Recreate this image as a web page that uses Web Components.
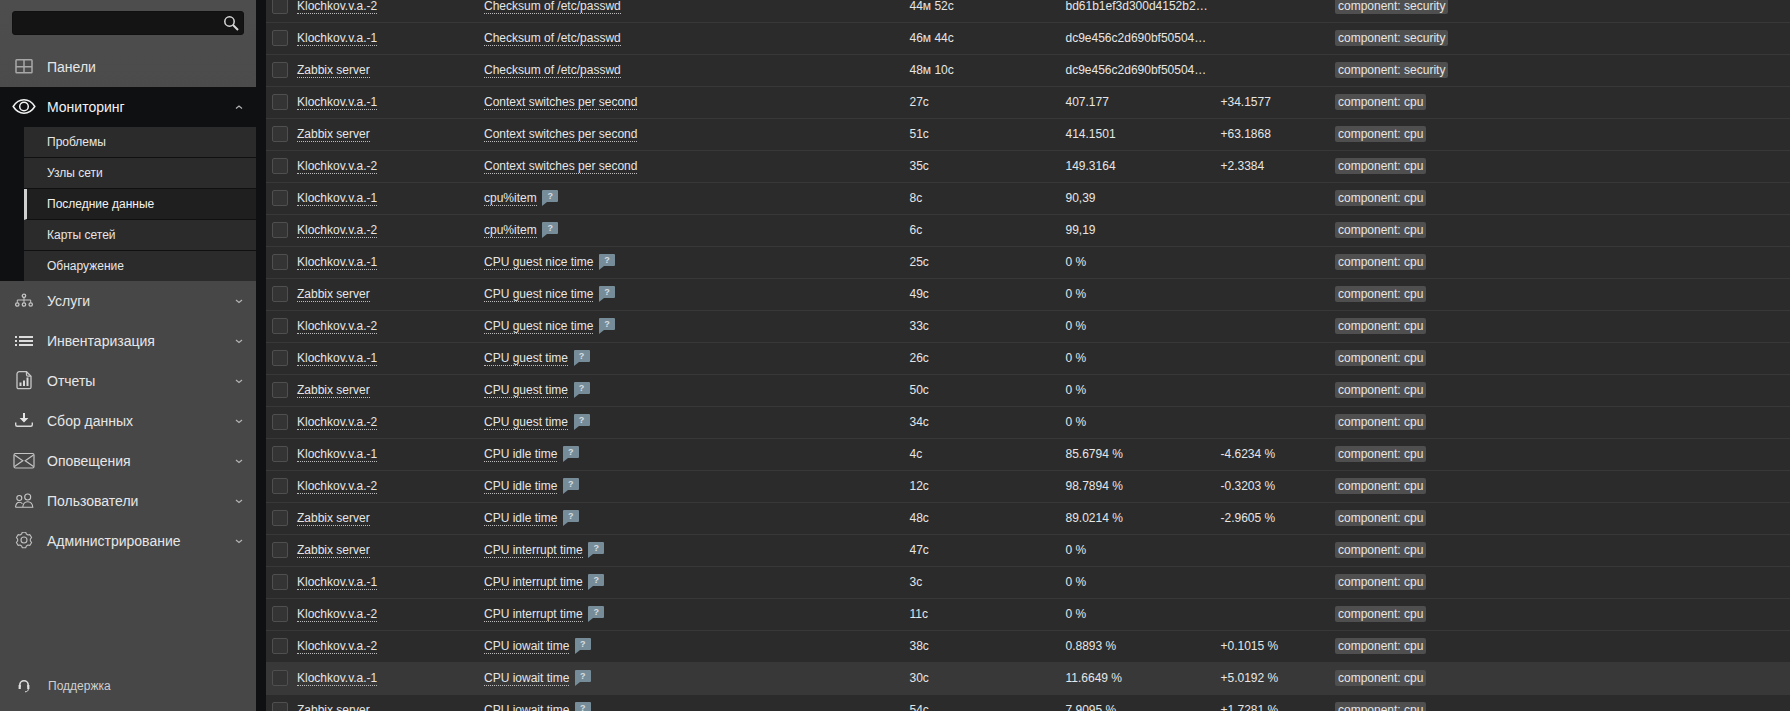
<!DOCTYPE html>
<html lang="ru">
<head>
<meta charset="utf-8">
<title>Последние данные</title>
<style>
  html, body { margin: 0; height: 100%; overflow: hidden; background: #0e1012; }
  body { font-family: "Liberation Sans", Arial, sans-serif; font-size: 12px; color: #e6e6e6; }
</style>
</head>
<body>
<zbx-app>
  <zbx-sidebar slot="side">
    <zbx-search></zbx-search>
    <zbx-nav-item label="Панели">
      <svg slot="icon" width="20" height="16" viewBox="0 0 20 16" fill="none" stroke="#a8a8a8" stroke-width="1.500"><rect x="2" y=".8" width="16" height="13" rx=".8"/><path d="M10 .8v13M2 7.800h16"/></svg>
    </zbx-nav-item>
    <zbx-nav-item label="Мониторинг" open>
      <svg slot="icon" width="24" height="18" viewBox="0 .5 24 18" fill="none" stroke="#f2f2f2" stroke-width="1.500"><path d="M1.200 9C4 4.600 7.800 2.300 12 2.300S20 4.600 22.800 9C20 13.400 16.200 15.700 12 15.700S4 13.400 1.200 9Z"/><circle cx="12" cy="9" r="4.300"/></svg>
      <zbx-sub-item>Проблемы</zbx-sub-item>
      <zbx-sub-item>Узлы сети</zbx-sub-item>
      <zbx-sub-item active>Последние данные</zbx-sub-item>
      <zbx-sub-item>Карты сетей</zbx-sub-item>
      <zbx-sub-item>Обнаружение</zbx-sub-item>
    </zbx-nav-item>
    <zbx-nav-item label="Услуги" closed>
      <svg slot="icon" width="20" height="16" viewBox="0 0 20 16" fill="none" stroke="#c4c4c4" stroke-width="1.300"><circle cx="10" cy="2.800" r="1.700"/><circle cx="3.300" cy="11.500" r="1.700"/><circle cx="10" cy="11.500" r="1.700"/><circle cx="16.700" cy="11.500" r="1.700"/><path stroke-width="1" d="M10 4.500v5.300M3.300 9.800V7h13.400v2.800"/></svg>
    </zbx-nav-item>
    <zbx-nav-item label="Инвентаризация" closed>
      <svg slot="icon" width="20" height="12" viewBox="0 0 20 12" fill="#dcdcdc"><rect x="1" y="1" width="2" height="2"/><rect x="1" y="5" width="2" height="2"/><rect x="1" y="9" width="2" height="2"/><rect x="5" y="1" width="14" height="2"/><rect x="5" y="5" width="14" height="2"/><rect x="5" y="9" width="14" height="2"/></svg>
    </zbx-nav-item>
    <zbx-nav-item label="Отчеты" closed>
      <svg slot="icon" width="16" height="20" viewBox="0 0 16 20" fill="none" stroke="#c8c8c8" stroke-width="1.300"><path d="M3.200 .7h7.300L15 5.200v11a1.500 1.500 0 0 1-1.500 1.500h-11A1.500 1.500 0 0 1 1 16.200V2.900A2.200 2.200 0 0 1 3.200 .7Z"/><path d="M10.500 .7v3a1.500 1.500 0 0 0 1.500 1.500h3"/><path fill="#d8d8d8" stroke="none" d="M3.500 11.500h2V15h-2zM7 9.500h2V15H7zM10.500 6.500h2V15h-2z"/></svg>
    </zbx-nav-item>
    <zbx-nav-item label="Сбор данных" closed>
      <svg slot="icon" width="20" height="16" viewBox="0 0 20 16" fill="#e4e4e4"><path d="M9 0h2v5h3.400L10 9.500 5.600 5H9z"/><path fill="none" stroke="#d8d8d8" stroke-width="1.400" d="M1.700 9.500v2.300a1.500 1.500 0 0 0 1.500 1.500h13.600a1.500 1.500 0 0 0 1.500-1.500V9.500"/></svg>
    </zbx-nav-item>
    <zbx-nav-item label="Оповещения" closed>
      <svg slot="icon" width="22" height="18" viewBox="0 0 22 18" fill="none" stroke="#c4c4c4" stroke-width="1.200"><rect x="1" y="1.500" width="20" height="14.500" rx="1.500"/><path d="M1.500 3 9.800 8.800 1.500 14.500M20.500 3 12.200 8.800 20.500 14.500"/></svg>
    </zbx-nav-item>
    <zbx-nav-item label="Пользователи" closed>
      <svg slot="icon" width="20" height="16" viewBox="0 0 20 16" fill="none" stroke="#c8c8c8" stroke-width="1.100"><circle cx="5.300" cy="5" r="2.500"/><circle cx="13.700" cy="4" r="3"/><path d="M1.500 14.200c.3-2.800 1.700-5 3.900-5 1.300 0 2.300.5 3 1.500M1.500 14.200h6.700M8.700 14.200c.3-3.300 2-5.500 5-5.500s4.800 2.200 5.100 5.500z"/></svg>
    </zbx-nav-item>
    <zbx-nav-item label="Администрирование" closed>
      <svg slot="icon" width="18" height="18" viewBox="0 1 18 18" fill="none" stroke="#c0c0c0" stroke-width="1.100" stroke-linejoin="round"><circle cx="9" cy="9" r="3"/><path d="M6.600 3.070 7.340 1.180h3.320l.74 1.890 1.540.89 2-.31 1.660 2.880-1.260 1.580v1.780l1.260 1.580-1.660 2.880-2-.31-1.540.89-.74 1.890H7.340l-.74-1.890-1.540-.89-2 .31-1.660-2.880 1.260-1.580V8.110L1.400 6.530l1.660-2.880 2 .31z"/></svg>
    </zbx-nav-item>
    <zbx-support slot="foot">Поддержка</zbx-support>
  </zbx-sidebar>
  <zbx-table id="table"></zbx-table>
</zbx-app>

<script>
class ZbxApp extends HTMLElement {
    constructor() {
        super();
        this.attachShadow({ mode: "open" }).innerHTML = `
        <style>
            :host { display: flex; height: 711px; overflow: hidden; }
            main { flex: 1; margin-left: 10px; overflow: hidden; background: #2b2b2b; }
        </style>
        <slot name="side"></slot>
        <main><slot></slot></main>`;
    }
}

class ZbxSidebar extends HTMLElement {
    constructor() {
        super();
        this.attachShadow({ mode: "open" }).innerHTML = `
        <style>
            :host { display: flex; flex-direction: column; flex: 0 0 256px; height: 711px;
                    background: linear-gradient(#4d4d4d, #474747 300px); }
            .list { display: flex; flex-direction: column; flex: 1; }
            .foot { padding: 0 0 17px; }
        </style>
        <div class="list"><slot></slot></div>
        <div class="foot"><slot name="foot"></slot></div>`;
    }
}

class ZbxSearch extends HTMLElement {
    constructor() {
        super();
        this.attachShadow({ mode: "open" }).innerHTML = `
        <style>
            :host { display: flex; justify-content: flex-end; align-items: center; box-sizing: border-box;
                    width: 232px; height: 24px; margin: 11px 12px 12px; padding-right: 4px;
                    background: #141414; border: 1px solid #0e1012; border-radius: 3px; }
            svg { display: block; }
        </style>
        <svg width="16" height="16" viewBox="0 0 16 16" fill="none" stroke="#d8d8d8"><circle cx="6.500" cy="6.500" r="4.700" stroke-width="1.500"/><path d="M10 10l5 5" stroke-width="2"/></svg>`;
    }
}

class ZbxNavItem extends HTMLElement {
    constructor() {
        super();
        this.attachShadow({ mode: "open" }).innerHTML = `
        <style>
            :host { display: block; font-size: 14px; color: #e6e6e6; }
            .head { display: flex; align-items: center; height: 40px; padding-right: 13px; }
            .icon { display: flex; justify-content: center; align-items: center; flex: 0 0 48px; margin-right: -1px; }
            .label { flex: 1; }
            .chev { display: none; }
            :host([open]) { background: #0e1012; color: #f2f2f2; }
            :host([open]) .chev, :host([closed]) .chev { display: block; }
            .sub { padding-left: 24px; }
        </style>
        <div class="head">
            <div class="icon"><slot name="icon"></slot></div>
            <div class="label">${this.getAttribute("label")}</div>
            <svg class="chev" width="8" height="6" viewBox="0 0 8 6" fill="none" stroke="#b4b4b4" stroke-width="1.200">
                <path d="${this.hasAttribute("open") ? "M1 4.500 4 2l3 2.500" : "M1 2 4 4.500 7 2"}"/>
            </svg>
        </div>
        <div class="sub"><slot></slot></div>`;
    }
}

class ZbxSubItem extends HTMLElement {
    constructor() {
        super();
        this.attachShadow({ mode: "open" }).innerHTML = `
        <style>
            :host { display: flex; align-items: center; box-sizing: border-box; height: 31px; padding-left: 23px;
                    font-size: 12px; color: #e6e6e6; background: #2b2b2b; border-bottom: 1px solid #0e1012; }
            :host(:last-child) { height: 30px; border-bottom: 0; }
            :host([active]) { background: #1f1f1f; border-left: 3px solid #d0d0d0; padding-left: 20px; color: #f2f2f2; }
        </style>
        <slot></slot>`;
    }
}

class ZbxSupport extends HTMLElement {
    constructor() {
        super();
        this.attachShadow({ mode: "open" }).innerHTML = `
        <style>
            :host { display: flex; align-items: center; height: 16px; padding-left: 18px; font-size: 12px; color: #d0d0d0; }
            svg { margin-right: 18px; }
        </style>
        <svg width="12" height="14" viewBox="0 0 12 14" fill="none" stroke="#e0e0e0" stroke-width="1.600">
            <path d="M1.800 8V6a4.200 4.200 0 0 1 8.400 0v2"/>
            <path fill="#e0e0e0" stroke="none" d="M.6 6h2.200v4H.6zM9.200 6h2.200v4H9.200z"/>
            <path stroke-width="1" d="M10.300 10c0 1.800-1.200 2.800-3.300 2.800"/>
        </svg>
        <slot></slot>`;
    }
}

class ZbxHint extends HTMLElement {
    constructor() {
        super();
        this.attachShadow({ mode: "open" }).innerHTML = `
        <style>
            :host { display: block; position: relative; flex: 0 0 16px; height: 16px; margin-left: 5.500px; }
            svg { position: absolute; inset: 0; }
            b { position: absolute; left: 0; top: 0; width: 16px; height: 12px; font: bold 9px/13px "Liberation Sans", sans-serif; color: #d8dee2; text-align: center; }
        </style>
        <svg width="16" height="16" viewBox="0 0 16 16" fill="#768d99"><path d="M1 0h14a1 1 0 0 1 1 1v10a1 1 0 0 1-1 1H5L0 16V1a1 1 0 0 1 1-1Z"/></svg>
        <b>?</b>`;
    }
}

class ZbxTag extends HTMLElement {
    constructor() {
        super();
        this.attachShadow({ mode: "open" }).innerHTML = `
        <style>
            :host { display: inline-block; height: 16px; padding: 0 3px; line-height: 16px; background: #4f4f4f; border-radius: 2px; color: #e6e6e6; vertical-align: top; }
        </style>
        <slot></slot>`;
    }
}

class ZbxRow extends HTMLElement {
    constructor() {
        super();
        this.attachShadow({ mode: "open" });
    }
    connectedCallback() {
        const a = n => this.getAttribute(n) || "";
        this.shadowRoot.innerHTML = `
        <style>
            :host { display: grid; grid-template-columns: 25px 187px 425.5px 156px 155px 114.5px 1fr; align-items: center;
                    box-sizing: border-box; height: 32px; padding: 0 0 1px 6px; border-bottom: 1px solid #383838; line-height: 14px; }
            :host([hover]) { background: #383838; }
            .check { box-sizing: border-box; width: 16px; height: 16px; background: #343434; border: 1px solid #4f4f4f; border-radius: 2px; }
            .link { border-bottom: 1px dotted #bcbcbc; }
            .name { display: flex; align-items: center; }
            .name .link { margin-bottom: -1px; }
            .tag { display: flex; }
        </style>
        <div class="check"></div>
        <div><span class="link">${a("host")}</span></div>
        <div class="name"><span class="link">${a("name")}</span>${this.hasAttribute("hint") ? "<zbx-hint></zbx-hint>" : ""}</div>
        <div>${a("age")}</div>
        <div>${a("value")}</div>
        <div>${a("change")}</div>
        <div class="tag"><zbx-tag>component: ${a("tag")}</zbx-tag></div>`;
    }
}

class ZbxTable extends HTMLElement {
    constructor() {
        super();
        this.attachShadow({ mode: "open" }).innerHTML = `
        <style>
            :host { display: block; margin-top: -9px; }
        </style>
        <slot></slot>`;
    }
}

customElements.define("zbx-app", ZbxApp);
customElements.define("zbx-sidebar", ZbxSidebar);
customElements.define("zbx-search", ZbxSearch);
customElements.define("zbx-nav-item", ZbxNavItem);
customElements.define("zbx-sub-item", ZbxSubItem);
customElements.define("zbx-support", ZbxSupport);
customElements.define("zbx-hint", ZbxHint);
customElements.define("zbx-tag", ZbxTag);
customElements.define("zbx-row", ZbxRow);
customElements.define("zbx-table", ZbxTable);

const K1 = "Klochkov.v.a.-1", K2 = "Klochkov.v.a.-2", ZS = "Zabbix server";
const CS = "Checksum of /etc/passwd", CX = "Context switches per second";
const rows = [
    [K2, CS, "44м 52с", "bd61b1ef3d300d4152b2…", "", "security"],
    [K1, CS, "46м 44с", "dc9e456c2d690bf50504…", "", "security"],
    [ZS, CS, "48м 10с", "dc9e456c2d690bf50504…", "", "security"],
    [K1, CX, "27с", "407.177", "+34.1577", "cpu"],
    [ZS, CX, "51с", "414.1501", "+63.1868", "cpu"],
    [K2, CX, "35с", "149.3164", "+2.3384", "cpu"],
    [K1, "cpu%item", "8с", "90,39", "", "cpu", 1],
    [K2, "cpu%item", "6с", "99,19", "", "cpu", 1],
    [K1, "CPU guest nice time", "25с", "0 %", "", "cpu", 1],
    [ZS, "CPU guest nice time", "49с", "0 %", "", "cpu", 1],
    [K2, "CPU guest nice time", "33с", "0 %", "", "cpu", 1],
    [K1, "CPU guest time", "26с", "0 %", "", "cpu", 1],
    [ZS, "CPU guest time", "50с", "0 %", "", "cpu", 1],
    [K2, "CPU guest time", "34с", "0 %", "", "cpu", 1],
    [K1, "CPU idle time", "4с", "85.6794 %", "-4.6234 %", "cpu", 1],
    [K2, "CPU idle time", "12с", "98.7894 %", "-0.3203 %", "cpu", 1],
    [ZS, "CPU idle time", "48с", "89.0214 %", "-2.9605 %", "cpu", 1],
    [ZS, "CPU interrupt time", "47с", "0 %", "", "cpu", 1],
    [K1, "CPU interrupt time", "3с", "0 %", "", "cpu", 1],
    [K2, "CPU interrupt time", "11с", "0 %", "", "cpu", 1],
    [K2, "CPU iowait time", "38с", "0.8893 %", "+0.1015 %", "cpu", 1],
    [K1, "CPU iowait time", "30с", "11.6649 %", "+5.0192 %", "cpu", 1, 1],
    [ZS, "CPU iowait time", "54с", "7.9095 %", "+1.7281 %", "cpu", 1]
];
const table = document.getElementById("table");
rows.forEach(r => {
    const row = document.createElement("zbx-row");
    ["host", "name", "age", "value", "change", "tag"].forEach((k, i) => row.setAttribute(k, r[i]));
    if (r[6]) row.setAttribute("hint", "");
    if (r[7]) row.setAttribute("hover", "");
    table.appendChild(row);
});
</script>
</body>
</html>
